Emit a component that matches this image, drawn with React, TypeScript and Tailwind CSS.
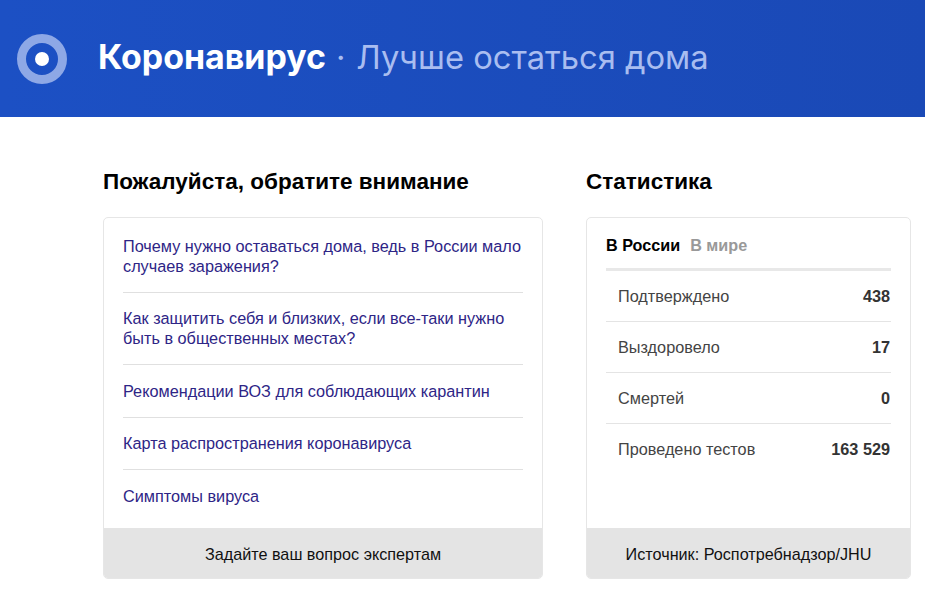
const questions = [
  'Почему нужно оставаться дома, ведь в России мало случаев заражения?',
  'Как защитить себя и близких, если все-таки нужно быть в общественных местах?',
  'Рекомендации ВОЗ для соблюдающих карантин',
  'Карта распространения коронавируса',
  'Симптомы вируса',
]

const stats = [
  { label: 'Подтверждено', value: '438' },
  { label: 'Выздоровело', value: '17' },
  { label: 'Смертей', value: '0' },
  { label: 'Проведено тестов', value: '163 529' },
]

export default function App() {
  return (
    <div className="h-[608px] w-[925px] overflow-hidden bg-white font-['Liberation_Sans',sans-serif]">
      <header className="flex h-[117px] items-center bg-gradient-to-r from-[#1c50c4] to-[#1a49b6] pl-[17px]">
        <div className="flex h-[50px] w-[50px] items-center justify-center rounded-full border-[9px] border-[#8ea8e6]">
          <div className="h-[14px] w-[14px] rounded-full bg-white" />
        </div>
        <h1 className="mb-[4px] ml-[31px] font-['Inter',sans-serif] text-[32.7px] leading-none text-[#a9bdf0]">
          <span className="text-[33.9px] font-bold text-white">Коронавирус</span>
          <span className="ml-[10px] mr-[11px]">·</span>
          <span>Лучше остаться дома</span>
        </h1>
      </header>

      <main className="flex gap-[43px] pl-[103px] pt-[52px]">
        <section className="w-[440px]">
          <h2 className="text-[22.5px] font-bold leading-[26px] text-black">Пожалуйста, обратите внимание</h2>
          <div className="mt-[22px] flex h-[362px] flex-col overflow-hidden rounded-[5px] border border-[#e6e6e6]">
            <ul className="flex-1 px-[19px] pt-[2px]">
              {questions.map((q) => (
                <li key={q} className="border-b border-[#e0e0e0] py-[15.75px] text-[16.25px] leading-[20px] text-[#2e2586] last:border-b-0">
                  {q}
                </li>
              ))}
            </ul>
            <div className="flex h-[50px] items-center justify-center bg-[#e4e4e4] pt-[2px] text-[16.2px] text-[#111]">
              Задайте ваш вопрос экспертам
            </div>
          </div>
        </section>

        <section className="w-[325px]">
          <h2 className="text-[22.5px] font-bold leading-[26px] text-black">Статистика</h2>
          <div className="mt-[22px] flex h-[362px] flex-col overflow-hidden rounded-[5px] border border-[#e6e6e6]">
            <div className="flex-1 px-[19px]">
              <div className="flex h-[53px] items-center gap-[10px] border-b-[3px] border-[#e8e8e8] pt-[4px] text-[16.2px] font-bold">
                <span className="text-black">В России</span>
                <span className="text-[#999]">В мире</span>
              </div>
              {stats.map((s) => (
                <div key={s.label} className="flex h-[51px] items-center justify-between border-b border-[#e4e4e4] pl-[12px] pr-[1px] pt-[1px] text-[16.25px] text-[#444] last:border-transparent">
                  <span>{s.label}</span>
                  <span className="font-bold text-[#333]">{s.value}</span>
                </div>
              ))}
            </div>
            <div className="flex h-[50px] items-center justify-center bg-[#e4e4e4] pt-[2px] text-[16.2px] text-[#111]">
              Источник: Роспотребнадзор/JHU
            </div>
          </div>
        </section>
      </main>
    </div>
  )
}
